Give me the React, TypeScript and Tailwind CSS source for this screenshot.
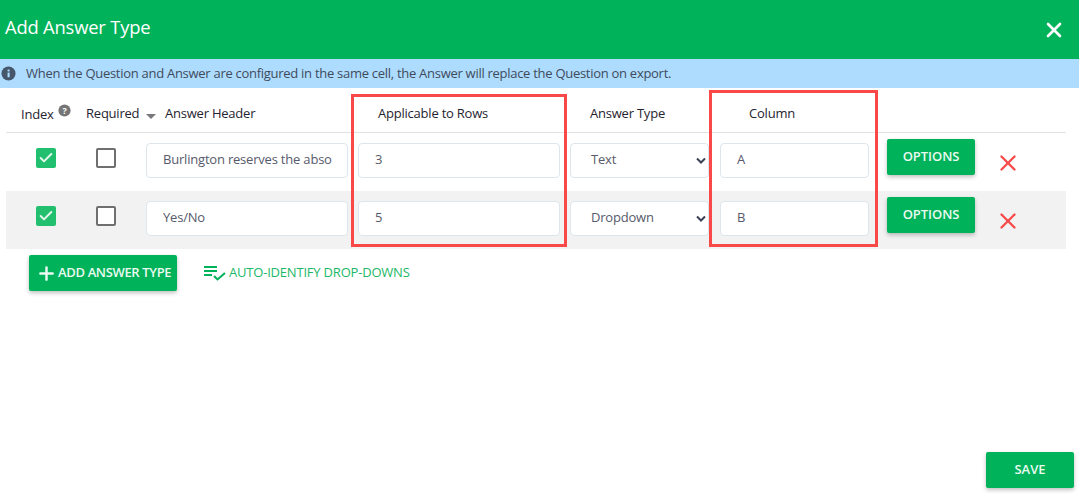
import { Check, Plus, X } from 'lucide-react';

function Checkbox({ checked }: { checked: boolean }) {
  if (checked) {
    return (
      <div className="flex h-5 w-5 items-center justify-center rounded-[2px] bg-[#22bf6f]">
        <Check className="h-4 w-4 text-[#e4f7ec]" strokeWidth={3} />
      </div>
    );
  }
  return <div className="h-5 w-5 rounded-[2px] border-2 border-[#6f6f6f] bg-white" />;
}

function Field({ value, width, pad = 'pl-4' }: { value: string; width: string; pad?: string }) {
  return (
    <div className={`flex h-[35px] items-center overflow-hidden whitespace-nowrap rounded-[4px] border border-[#dce6ec] bg-white pb-[2px] text-[13px] tracking-[-0.2px] text-[#575a6b] ${pad} ${width}`}>
      {value}
    </div>
  );
}

function Row({ header, rows, type, col, striped }: { header: string; rows: string; type: string; col: string; striped?: boolean }) {
  return (
    <div className={`flex h-[58px] items-start ${striped ? 'bg-[#f2f2f2]' : ''}`}>
      <div className="ml-[30px] mt-[15px]"><Checkbox checked /></div>
      <div className="ml-[40px] mt-[15px]"><Checkbox checked={false} /></div>
      <div className="ml-[30px] mt-[10px]"><Field value={header} width="w-[202px]" /></div>
      <div className="ml-[10px] mt-[10px]"><Field value={rows} width="w-[202px]" /></div>
      <div className="relative ml-[10px] mt-[10px]">
        <Field value={type} width="w-[139px]" pad="pl-[20px]" />
        <svg className="absolute right-[3px] top-[14px] h-[8px] w-[10px]" viewBox="0 0 10 8" fill="none" stroke="#3b4256" strokeWidth="2">
          <path d="M1 1.5 5 5.5 9 1.5" />
        </svg>
      </div>
      <div className="ml-[11px] mt-[10px]"><Field value={col} width="w-[149px]" /></div>
      <button className="ml-[18px] mt-[6px] h-[36px] w-[88px] rounded-[2px] bg-[#00b259] text-[13px] font-semibold tracking-[-0.05px] text-[#eafaf1] shadow-[0_2px_4px_rgba(0,0,0,0.25)]">
        OPTIONS
      </button>
      <X className="ml-[20px] mt-[17px] h-[26px] w-[26px] text-[#f94a4a]" strokeWidth={2.2} />
    </div>
  );
}

export default function App() {
  return (
    <div className="relative h-[494px] w-[1079px] overflow-hidden bg-white font-['Open_Sans','Noto_Sans',sans-serif]">
      <div className="flex h-[59px] items-center justify-between bg-[#00b259] pl-[5px] pr-[13px]">
        <span className="pb-[6px] text-[18.4px] font-medium tracking-[-0.2px] text-white">Add Answer Type</span>
        <X className="h-[24px] w-[24px] text-white" strokeWidth={2.6} />
      </div>

      <div className="flex h-[29px] items-center bg-[#aedcff] pl-[1px] text-[13px] tracking-[-0.28px] text-[#3f4b5c]">
        <svg className="h-[15px] w-[15px] shrink-0" viewBox="0 0 16 16">
          <circle cx="8" cy="8" r="7.5" fill="#46566b" />
          <rect x="7" y="7" width="2.2" height="5" fill="#aedcff" />
          <rect x="7" y="3.8" width="2.2" height="2" fill="#aedcff" />
        </svg>
        <span className="ml-[10px]">When the Question and Answer are configured in the same cell, the Answer will replace the Question on export.</span>
      </div>

      <div className="ml-[6px] w-[1060px]">
        <div className="flex h-[45px] items-center border-b border-[#dfe3e6] pt-[7px] text-[13px] tracking-[-0.22px] text-[#1f2430]">
          <div className="ml-[15px] mt-[2px] flex w-[65px] items-start">
            <span>Index</span>
            <svg className="ml-[4px] -mt-[1px] h-[13px] w-[13px]" viewBox="0 0 16 16">
              <circle cx="8" cy="8" r="7.5" fill="#757575" />
              <text x="8" y="12" textAnchor="middle" fontSize="11" fontWeight="700" fill="#fff">?</text>
            </svg>
          </div>
          <span className="w-[60px]">Required</span>
          <svg className="mt-[6px] h-[5px] w-[10px]" viewBox="0 0 10 5"><path d="M0 0h10L5 5z" fill="#77797c" /></svg>
          <span className="ml-[9px] w-[213px]">Answer Header</span>
          <span className="w-[212px]">Applicable to Rows</span>
          <span className="w-[159px]">Answer Type</span>
          <span>Column</span>
        </div>
        <Row header="Burlington reserves the abso" rows="3" type="Text" col="A" />
        <Row header="Yes/No" rows="5" type="Dropdown" col="B" striped />
      </div>

      <div className="ml-[29px] mt-[6px] flex items-center">
        <button className="flex h-[36px] w-[148px] items-center rounded-[2px] bg-[#00b259] pl-[7px] text-[13px] font-semibold text-[#eafaf1] shadow-[0_2px_4px_rgba(0,0,0,0.25)]">
          <Plus className="mr-[1px] h-[21px] w-[21px]" strokeWidth={2.8} />
          <span className="tracking-[-0.35px]">ADD ANSWER TYPE</span>
        </button>
        <svg className="ml-[27px] h-[16px] w-[22px]" viewBox="0 0 22 16" fill="none" stroke="#00b259" strokeWidth="2">
          <path d="M0 2h13M0 6h13M0 10h8M10 11l3.5 3.5L21 8" />
        </svg>
        <span className="ml-[3px] text-[13px] tracking-[-0.2px] text-[#1bb867]">AUTO-IDENTIFY DROP-DOWNS</span>
      </div>

      <button className="absolute left-[986px] top-[452px] h-[36px] w-[88px] rounded-[2px] bg-[#00b259] text-[13px] font-semibold text-[#eafaf1] shadow-[0_2px_4px_rgba(0,0,0,0.25)]">
        SAVE
      </button>

      {/* red annotation boxes drawn over the table */}
      <div className="absolute left-[351px] top-[94px] h-[153px] w-[216px] border-[3px] border-[#f94848]" />
      <div className="absolute left-[709px] top-[90px] h-[157px] w-[169px] border-[3px] border-[#f94848]" />
    </div>
  );
}
